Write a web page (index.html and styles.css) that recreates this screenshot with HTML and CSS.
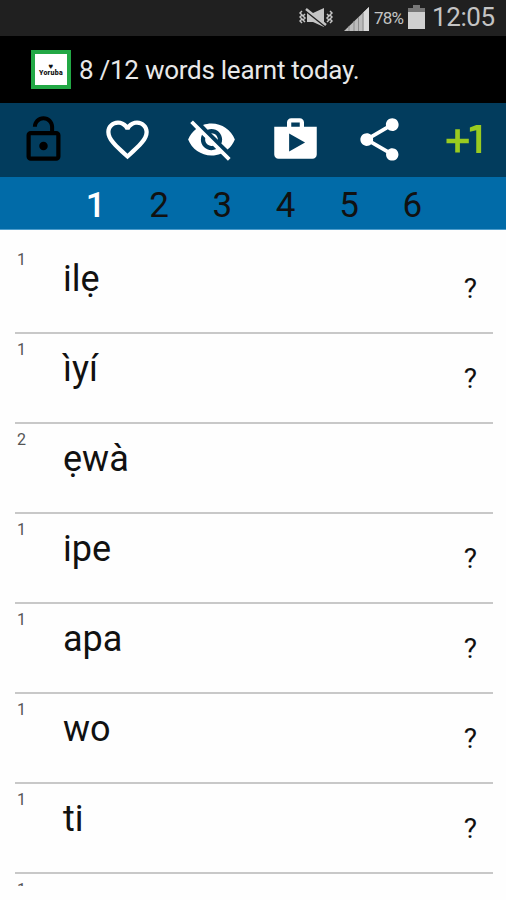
FILE: index.html
```html
<!DOCTYPE html>
<html lang="yo">
<head>
<meta charset="utf-8">
<title>Yoruba words</title>
<link rel="stylesheet" href="styles.css">
</head>
<body>
<div class="status">
  <svg class="mute" width="34" height="22" viewBox="0 0 34 22" fill="none" stroke="#c4c4c4" stroke-width="1.5">
    <path d="M3 4l-2 2 2 2-2 2 2 2-2 2 2 2M6 7l-2 2 2 2-2 2 2 2M28 7l2 2-2 2 2 2-2 2M31 4l2 2-2 2 2 2-2 2 2 2-2 2"/>
    <path d="M8 6h6l11-5v19l-11-5H8z" fill="#c4c4c4" stroke="none"/>
    <path d="M7 4l20 16" stroke="#202020" stroke-width="2"/>
    <path d="M7 2l20 16" stroke-width="2.500"/>
  </svg>
  <svg class="signal" width="25" height="24" viewBox="0 0 25 24">
    <path d="M0 24L25 0v24z" fill="#bcbcbc"/>
    <path d="M19.500 5.300L25 0v24h-5.500z" fill="#dadada"/>
    <path d="M5 19v5M10 14v10M14.500 10v14M19 6v18" stroke="#8c8c8c" stroke-width="1"/>
  </svg>
  <span class="percent">78%</span>
  <svg class="battery" width="17" height="24" viewBox="0 0 17 24">
    <path d="M5 0h7v3h5v21H0V3h5z" fill="#777"/>
    <path d="M0 7h17v17H0z" fill="#d0d0d0"/>
  </svg>
  <span class="clock">12:05</span>
</div>
<div class="title">
  <div class="logo"><span class="mark">♥</span><span>Yoruba</span></div>
  <span class="headline">8 /12 words learnt today.</span>
</div>
<div class="tools">
  <svg viewBox="0 0 24 24" fill="#000"><path d="M12 17c1.100 0 2-.9 2-2s-.9-2-2-2-2 .9-2 2 .9 2 2 2zm6-9h-1V6c0-2.760-2.240-5-5-5S7 3.240 7 6h1.900c0-1.710 1.390-3.100 3.100-3.100s3.100 1.390 3.100 3.100v2H6c-1.100 0-2 .9-2 2v10c0 1.100.9 2 2 2h12c1.100 0 2-.9 2-2V10c0-1.100-.9-2-2-2zm0 12H6V10h12v10z"/></svg>
  <svg viewBox="0 0 24 24"><path d="M16.500 3c-1.740 0-3.410.81-4.500 2.090C10.910 3.810 9.240 3 7.500 3 4.420 3 2 5.420 2 8.500c0 3.780 3.400 6.860 8.550 11.540L12 21.350l1.450-1.320C18.600 15.360 22 12.280 22 8.500 22 5.420 19.580 3 16.500 3zm-4.400 15.550l-.1.100-.1-.1C7.140 14.240 4 11.390 4 8.500 4 6.500 5.500 5 7.500 5c1.540 0 3.040.99 3.570 2.360h1.870C13.460 5.990 14.960 5 16.500 5c2 0 3.500 1.500 3.500 3.500 0 2.890-3.140 5.740-7.900 10.050z"/></svg>
  <svg viewBox="0 0 24 24"><path d="M12 7c2.760 0 5 2.240 5 5 0 .65-.13 1.260-.36 1.830l2.920 2.920c1.510-1.260 2.700-2.890 3.430-4.750-1.730-4.390-6-7.500-11-7.500-1.400 0-2.740.25-3.980.7l2.160 2.160C10.740 7.130 11.350 7 12 7zM2 4.270l2.280 2.280.46.46C3.080 8.300 1.780 10.020 1 12c1.730 4.390 6 7.500 11 7.500 1.550 0 3.030-.3 4.380-.84l.42.42L19.730 22 21 20.730 3.270 3 2 4.270zM7.530 9.800l1.550 1.550c-.05.21-.08.43-.08.65 0 1.660 1.340 3 3 3 .22 0 .44-.03.65-.08l1.550 1.550c-.67.33-1.410.53-2.200.53-2.760 0-5-2.240-5-5 0-.79.2-1.530.53-2.200zm4.310-.78l3.150 3.150.02-.16c0-1.660-1.340-3-3-3l-.17.01z"/></svg>
  <svg viewBox="0 0 24 24"><path fill-rule="evenodd" d="M16 6V4c0-1.110-.89-2-2-2h-4c-1.110 0-2 .89-2 2v2H2v13c0 1.110.89 2 2 2h16c1.110 0 2-.89 2-2V6h-6zm-6-2h4v2h-4V4zM9 17.700V9.200l7.500 4.200L9 17.700z"/></svg>
  <svg viewBox="0 0 24 24"><path d="M18 16.080c-.76 0-1.440.3-1.960.77L8.910 12.700c.05-.23.09-.46.09-.7s-.04-.47-.09-.7l7.050-4.110c.54.5 1.250.81 2.040.81 1.660 0 3-1.340 3-3s-1.340-3-3-3-3 1.340-3 3c0 .24.04.47.09.7L8.040 9.810C7.500 9.310 6.790 9 6 9c-1.660 0-3 1.340-3 3s1.340 3 3 3c.79 0 1.500-.31 2.040-.81l7.120 4.160c-.05.21-.08.43-.08.65 0 1.610 1.310 2.920 2.920 2.920s2.920-1.310 2.920-2.920-1.310-2.920-2.920-2.920z"/></svg>
  <svg viewBox="0 0 24 24" fill="#9acb20"><path d="M10.300 7.200H8.100v4.500H4v2.100h4.100v4.300h2.200v-4.300h4.200v-2.100h-4.200zM15 6.300v2.100l3-.7v10.700h2.300V5.200H18z"/></svg>
</div>
<div class="pages"><span class="on">1</span><span>2</span><span>3</span><span>4</span><span>5</span><span>6</span></div>
<div class="list">
  <div class="row"><span class="count">1</span><span class="word">ilẹ</span><span class="ask">?</span></div>
  <div class="row"><span class="count">1</span><span class="word">ìyí</span><span class="ask">?</span></div>
  <div class="row"><span class="count">2</span><span class="word">ẹwà</span></div>
  <div class="row"><span class="count">1</span><span class="word">ipe</span><span class="ask">?</span></div>
  <div class="row"><span class="count">1</span><span class="word">apa</span><span class="ask">?</span></div>
  <div class="row"><span class="count">1</span><span class="word">wo</span><span class="ask">?</span></div>
  <div class="row"><span class="count">1</span><span class="word">ti</span><span class="ask">?</span></div>
  <div class="row"><span class="count">1</span></div>
</div>
</body>
</html>
```
FILE: styles.css
```css
* { box-sizing: border-box; }
body {
  margin: 0;
  height: 900px;
  overflow: hidden;
  background: #fefefe;
  font-family: Roboto, "Noto Sans", sans-serif;
  color: #111;
}
.status {
  height: 36px;
  background: #202020;
  display: flex;
  align-items: center;
  padding-left: 299px;
  color: #c4c4c4;
}
.status svg { flex: none; }
.signal { margin: 2px 0 0 11px; }
.percent { width: 34px; margin-left: 5px; font-size: 17px; letter-spacing: -0.8px; }
.battery { margin-top: -2px; }
.clock { margin: -2px 0 0 7px; font-size: 26px; line-height: 34px; letter-spacing: -0.4px; white-space: nowrap; }
.title {
  height: 67px;
  background: #000;
  display: flex;
  align-items: center;
  padding-left: 31px;
  color: #e8e8e8;
}
.logo {
  width: 40px;
  height: 39px;
  border: 4px solid #22a845;
  background: #fff;
  color: #111;
  display: flex;
  flex-direction: column;
  align-items: center;
  justify-content: center;
  font-size: 7px;
  font-weight: 900;
  line-height: 7px;
  letter-spacing: 0.3px;
}
.mark { font-size: 8px; }
.headline { margin-left: 8px; padding-top: 1px; font-size: 26px; letter-spacing: -0.26px; white-space: nowrap; }
.tools {
  height: 74px;
  background: #023c5d;
  display: flex;
  align-items: center;
  justify-content: space-around;
  padding: 0 0 2px 1px;
  fill: #fff;
}
.tools svg { width: 51px; height: 51px; }
.pages {
  height: 53px;
  background: #016ba8;
  display: flex;
  padding: 0 62px 0 64px;
  font-size: 35px;
  line-height: 57px;
  border-bottom: 1px solid #4d9dcc;
}
.pages span { flex: 1; text-align: center; }
.pages .on { color: #fff; font-weight: 500; }
.list {
  height: 656px;
  overflow: hidden;
  padding: 14px 13px 0 15px;
}
.row {
  height: 90px;
  display: flex;
  align-items: flex-start;
  border-bottom: 2px solid #c8c8c8;
}
.count { width: 48px; padding: 7px 0 0 2px; font-size: 16px; line-height: 18px; color: #555; }
.word { padding-top: 14px; font-size: 36px; line-height: 42px; }
.ask { margin-left: auto; padding: 29px 16px 0 0; font-size: 28px; line-height: 32px; }
```
